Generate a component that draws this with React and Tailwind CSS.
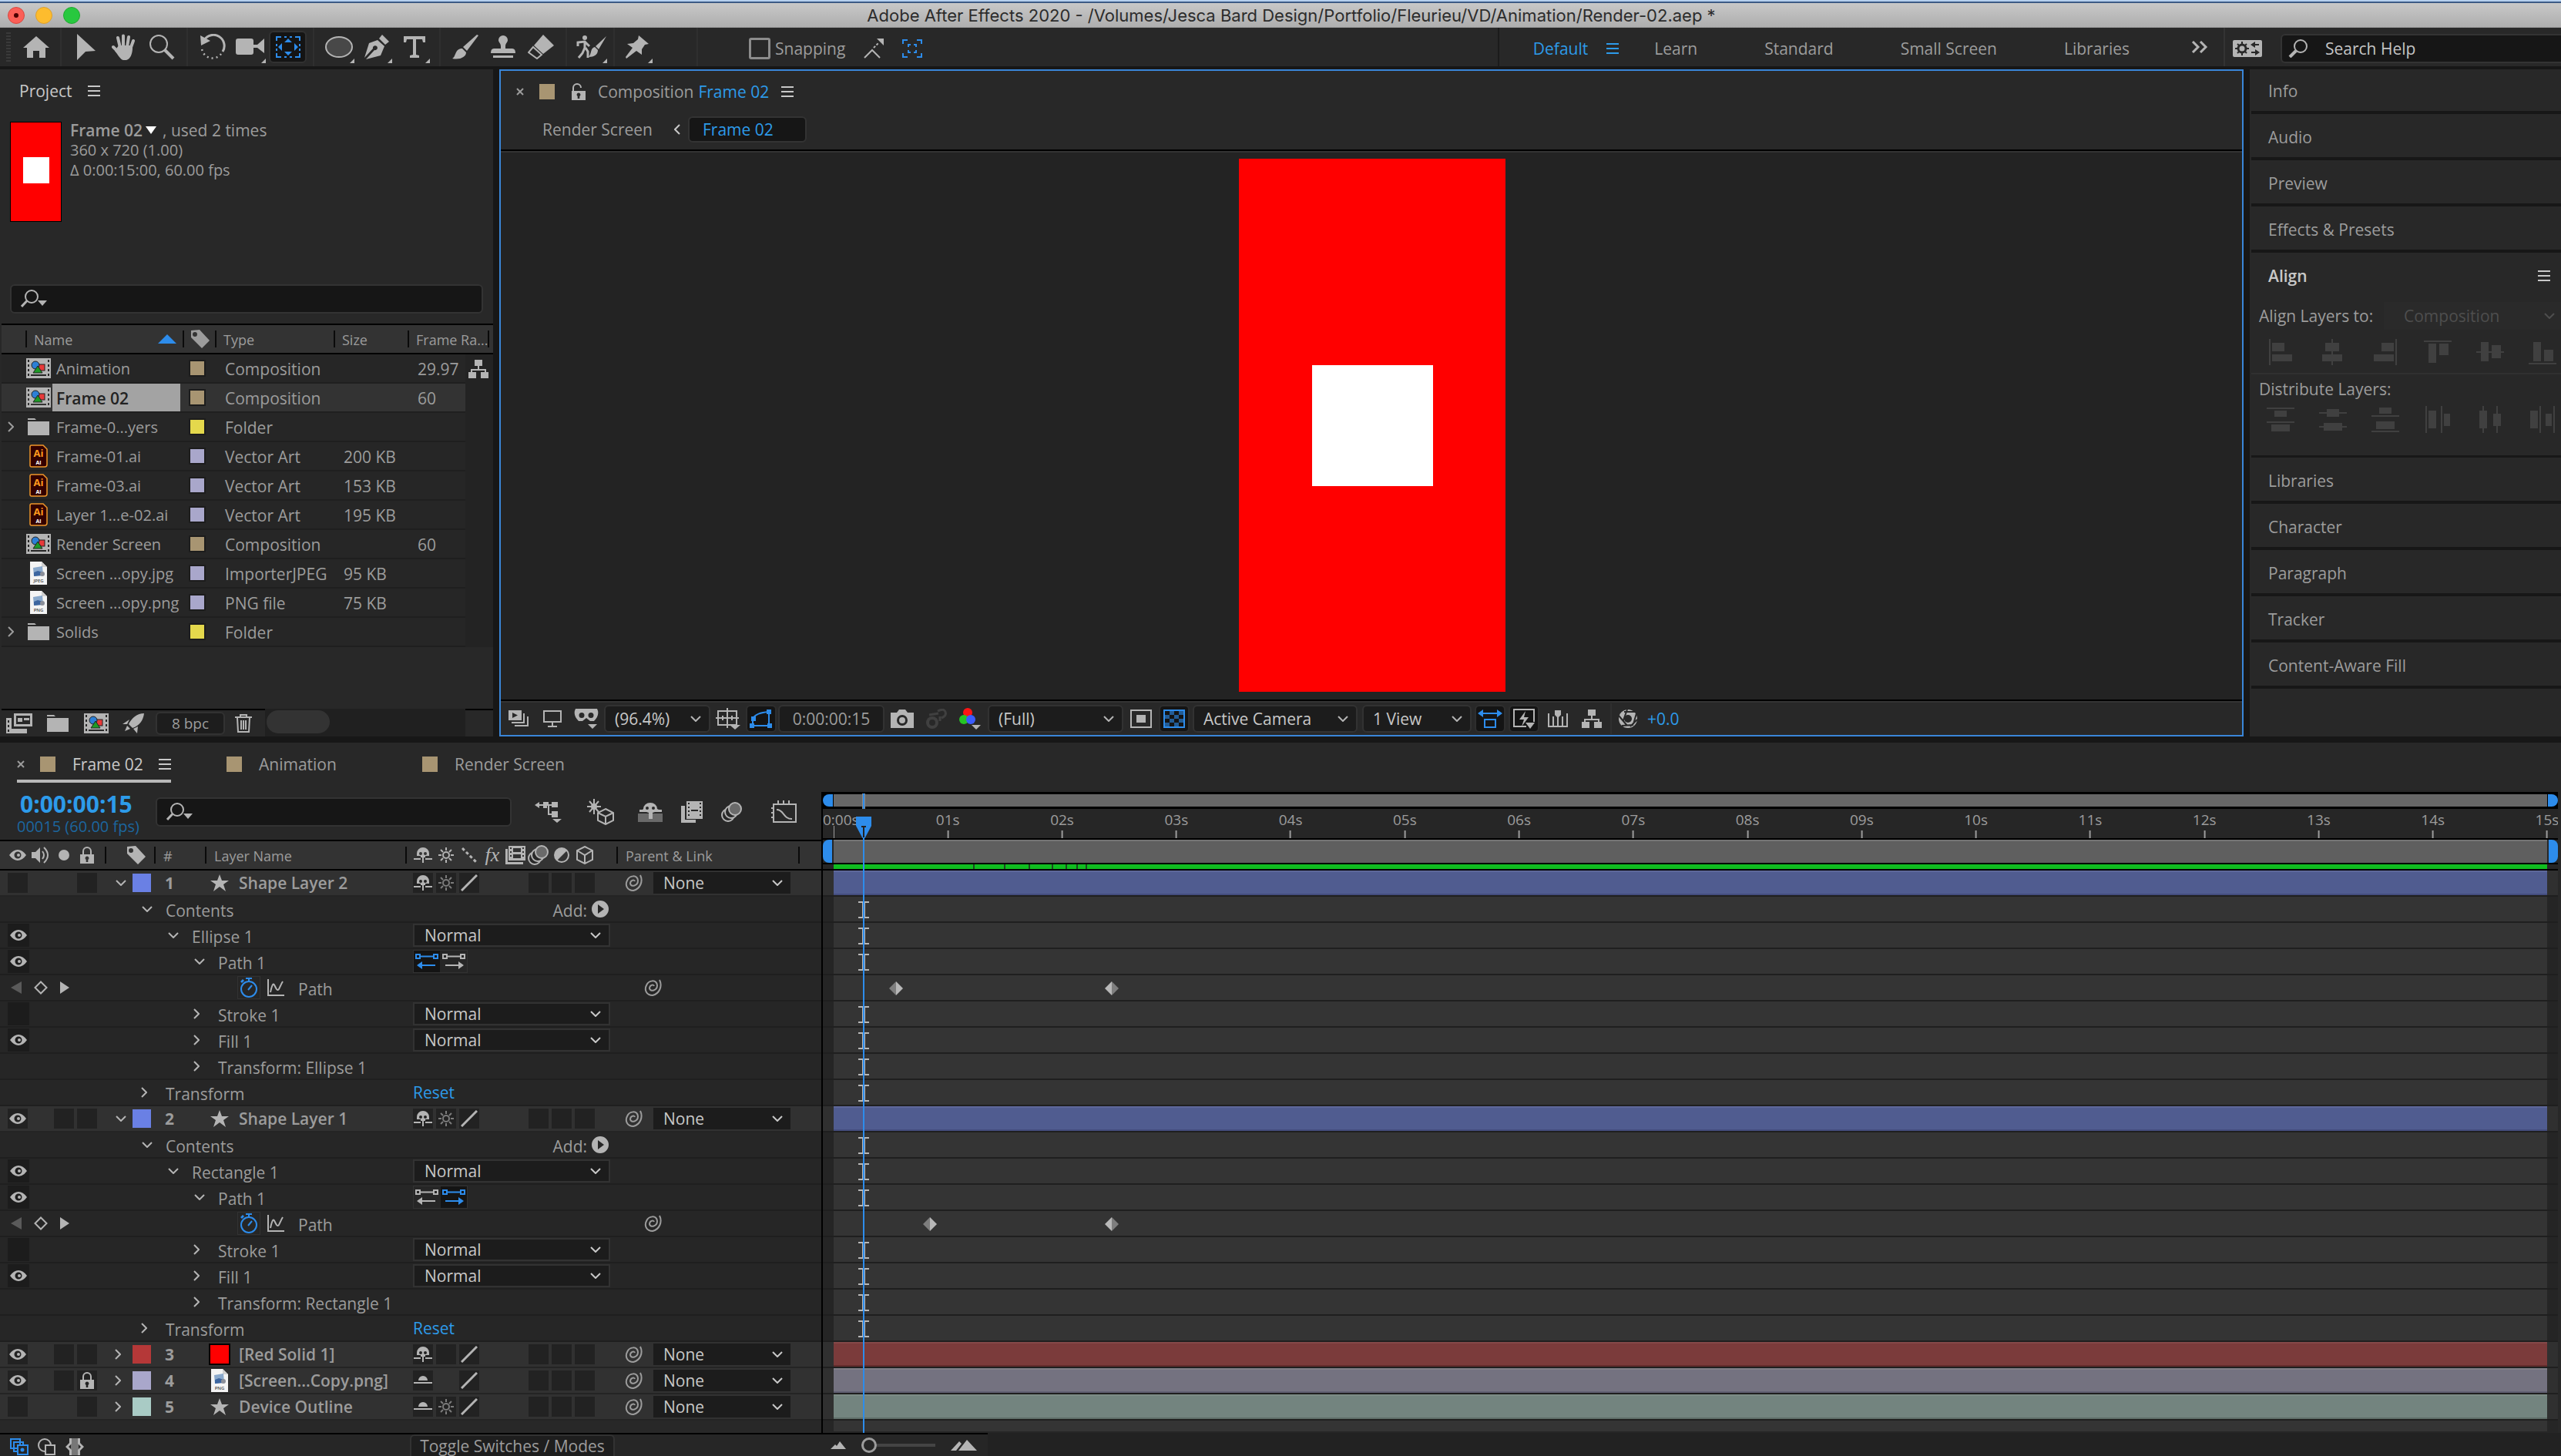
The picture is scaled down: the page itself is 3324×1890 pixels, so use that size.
import React, { useState } from 'react';

const Svg = ({ w, h = w, children, className = '' }) => (
  <svg width={w} height={h} viewBox={`0 0 ${w} ${h}`} fill="currentColor" className={`shrink-0 ${className}`} aria-hidden="true">
    {children}
  </svg>
);

/* ---------- Shared icons ---------- */

const ChevronDown = ({ className = '' }) => (
  <Svg w={14} h={8} className={className}>
    <path d="M1 1l6 6 6-6" fill="none" stroke="currentColor" strokeWidth="2" />
  </Svg>
);

const ChevronRight = ({ className = '' }) => (
  <Svg w={8} h={14} className={className}>
    <path d="M1 1l6 6-6 6" fill="none" stroke="currentColor" strokeWidth="2" />
  </Svg>
);

const MenuIcon = () => (
  <Svg w={16} h={14}>
    <path d="M0 0h16v2H0zM0 6h16v2H0zM0 12h16v2H0z" />
  </Svg>
);

const CloseIcon = () => (
  <Svg w={10}>
    <path d="M1 1l8 8M9 1l-8 8" stroke="currentColor" strokeWidth="2" />
  </Svg>
);

const SearchMenuIcon = () => (
  <Svg w={34} h={24}>
    <circle cx="14" cy="9" r="8" fill="none" stroke="currentColor" strokeWidth="2" />
    <path d="M8 14.500L1 22" stroke="currentColor" strokeWidth="3" />
    <path d="M22 14h12l-6 7z" />
  </Svg>
);

const TagIcon = () => (
  <Svg w={24}>
    <path fillRule="evenodd" d="M0 1L11 0l13 14-10 10L0 10zM5 3a3 3 0 100 6 3 3 0 000-6z" />
  </Svg>
);

const LockIcon = ({ open }) => (
  <Svg w={18} h={22}>
    <path d={open ? 'M2 11V6a5 5 0 0110 0' : 'M4 11V6a5 5 0 0110 0v5'} fill="none" stroke="currentColor" strokeWidth="2" />
    <path fillRule="evenodd" d="M0 10h18v12H0zM9 12.500a2.500 2.500 0 00-1.300 4.600V20h2.600v-2.900A2.500 2.500 0 009 12.500z" />
  </Svg>
);

const EyeIcon = () => (
  <Svg w={22} h={14}>
    <path fillRule="evenodd" d="M0 7Q5 0 11 0t11 7q-5 7-11 7T0 7zM11 2.500a4.500 4.500 0 100 9 4.500 4.500 0 000-9z" />
    <circle cx="12" cy="7" r="2" />
  </Svg>
);

const SpeakerIcon = () => (
  <Svg w={24} h={22}>
    <path d="M0 7h5l6-6v20l-6-6H0z" />
    <path d="M14 6q4 5 0 10M16 1q10 10 0 20" fill="none" stroke="currentColor" strokeWidth="2" />
  </Svg>
);

const ShyIcon = () => (
  <Svg w={24} h={20}>
    <path fillRule="evenodd" d="M4 11V8a8 8 0 0116 0v3h-5v2H9v-2zM9 6a2 2 0 100 4 2 2 0 000-4zm6 0a2 2 0 100 4 2 2 0 000-4z" />
    <path d="M0 14h9v2H0zM15 14h9v2h-9zM11 12h2v8h-2z" />
  </Svg>
);

const ShyDownIcon = () => (
  <Svg w={24} h={12}>
    <path d="M6 6a6 6 0 0112 0zM0 8h24v2H0z" />
  </Svg>
);

const SunIcon = () => (
  <Svg w={22}>
    <circle cx="11" cy="11" r="4" fill="none" stroke="currentColor" strokeWidth="2" />
    <path d="M11 1v4M11 17v4M1 11h4M17 11h4M4 4l3 3M15 15l3 3M18 4l-3 3M7 15l-3 3" stroke="currentColor" strokeWidth="2" />
  </Svg>
);

const SlashIcon = () => (
  <Svg w={22}>
    <path d="M1 21L21 1" stroke="currentColor" strokeWidth="3" />
  </Svg>
);

const FilmIcon = () => (
  <Svg w={26} h={24}>
    <path d="M0 4h3v17h20v3H0z" />
    <path fillRule="evenodd" d="M4 0h22v19H4zM6 2v2h2V2zm0 5v2h2V7zm0 5v2h2v-2zM22 2v2h2V2zm0 5v2h2V7zm0 5v2h2v-2zM10 3v5h10V3zm0 8v5h10v-5z" />
  </Svg>
);

const MotionBlurIcon = () => (
  <Svg w={28} h={26}>
    <circle cx="9" cy="17" r="8" fill="#282828" stroke="currentColor" strokeWidth="2" />
    <circle cx="13" cy="13" r="8" fill="#282828" stroke="currentColor" strokeWidth="2" />
    <circle cx="18" cy="9" r="8" fill="#6a6a6a" stroke="currentColor" strokeWidth="2" />
  </Svg>
);

const CubeIcon = () => (
  <Svg w={24}>
    <path d="M12 1l10 5v12l-10 5L2 18V6zM2 6l10 6 10-6M12 12v11" fill="none" stroke="currentColor" strokeWidth="2" />
  </Svg>
);

const FlowchartIcon = () => (
  <Svg w={26} h={24}>
    <path d="M8 0h10v8H8zM0 16h10v8H0zM16 16h10v8H16zM12 8h2v4h9v4h-2v-2H5v2H3v-4h9z" />
  </Svg>
);

const PickWhip = () => (
  <Svg w={24} h={22}>
    <path
      d="M20 1c4 8 0 18-9 20C3 21 0 14 3 8 6 1 16 0 17 8c0 7-9 9-10 4 0-4 5-6 6-3"
      fill="none"
      stroke="currentColor"
      strokeWidth="2"
    />
  </Svg>
);

const StarIcon = () => (
  <Svg w={24} h={22}>
    <path d="M12 0l3 8h9l-7 5 3 9-8-6-8 6 3-9-7-5h9z" />
  </Svg>
);

const CompIcon = () => (
  <Svg w={32} h={26} className="text-[#b4b4b4]">
    <path
      fillRule="evenodd"
      d="M0 0h32v26H0zM2 2v3h2V2zm0 6v3h2V8zm0 6v3h2v-3zm0 6v3h2v-3zM28 2v3h2V2zm0 6v3h2V8zm0 6v3h2v-3zm0 6v3h2v-3zM6 21v2h20v-2z"
    />
    <rect x="16" y="8" width="8" height="8" fill="#e83a3a" stroke="#222" strokeWidth="1" />
    <circle cx="12" cy="9" r="5" fill="#2d7fd6" stroke="#222" strokeWidth="1" />
    <path d="M15 10l6 9H9z" fill="#1d9a26" stroke="#222" strokeWidth="1" />
  </Svg>
);

const FolderIcon = () => (
  <Svg w={28} h={22} className="text-[#b4b4b4]">
    <path d="M0 0h9l2 2H0zM0 4h28v18H0z" />
  </Svg>
);

const AiIcon = () => (
  <Svg w={24} h={30}>
    <path d="M3 1h15l5 5v20q0 3-3 3H3q-2 0-2-2V3q0-2 2-2z" fill="#330000" stroke="#f0962a" strokeWidth="1.500" />
    <text x="12" y="16" textAnchor="middle" fontSize="13" fontWeight="700" fontFamily="Open Sans, sans-serif" fill="#ff9a1e">Ai</text>
    <text x="12" y="26" textAnchor="middle" fontSize="7" fontWeight="700" fontFamily="Open Sans, sans-serif" fill="#fff">AI</text>
  </Svg>
);

const ImageFileIcon = ({ kind }) => (
  <Svg w={22} h={30}>
    <path d="M0 0h15l7 7v23H0z" fill="#f4f4f4" />
    <path d="M15 0v7h7z" fill="#cfcfcf" />
    <path d="M4 8l12-2 1 11-12 2z" fill="#8aa9cc" />
    <path d="M5 14l5-2 7 2v4l-12 1z" fill="#3d66a0" />
    <circle cx="16" cy="16" r="3" fill="#8b8f99" />
    <text x="11" y="27" textAnchor="middle" fontSize="6" fontWeight="600" fontFamily="Open Sans, sans-serif" fill="#444">{kind}</text>
  </Svg>
);

/* ---------- Title bar and toolbar ---------- */

const TitleBar = () => (
  <header className="shrink-0">
    <div className="h-0.5 bg-[#b5cfee]" />
    <div className="h-0.5 bg-[#3c5a85]" />
    <div className="grid h-8 grid-cols-[1fr_auto_1fr] items-center border-b border-[#9a9a9a] bg-linear-to-b from-[#c8c8c8] to-[#aeaeae] px-2.5">
      <div className="flex gap-3.5">
        <button aria-label="Close" className="flex size-[22px] items-center justify-center rounded-full border border-[#d9483f] bg-[#fb5f57]">
          <span className="size-1.5 rounded-full bg-[#4c0000]" />
        </button>
        <button aria-label="Minimize" className="size-[22px] rounded-full border border-[#dea02c] bg-[#fdbc2e]" />
        <button aria-label="Zoom" className="size-[22px] rounded-full border border-[#1fa92f] bg-[#28c83f]" />
      </div>
      <h1 className="pl-7 font-['Inter',sans-serif] text-[22px] leading-8 text-[#2c2c2c]">
        Adobe After Effects 2020 - /Volumes/Jesca Bard Design/Portfolio/Fleurieu/VD/Animation/Render-02.aep *
      </h1>
    </div>
  </header>
);

const toolGroups = [
  [
    {
      name: 'Selection',
      icon: <Svg w={26} h={36}><path d="M1 1l24 22-13 1L1 35z" /></Svg>,
    },
    {
      name: 'Hand',
      icon: (
        <Svg w={32} h={34}>
          <path d="M11 18L8 5M15 17V2.500M20 17l2-13M24 20l4-11M9 24l-7-7" fill="none" stroke="currentColor" strokeWidth="4" strokeLinecap="round" />
          <path d="M9 15h15l3 3c0 8-3 15-8 16h-4c-4-1-7-7-11-12z" />
        </Svg>
      ),
    },
    {
      name: 'Magnify',
      icon: (
        <Svg w={34} h={34}>
          <circle cx="13" cy="13" r="11" fill="none" stroke="currentColor" strokeWidth="2" />
          <path d="M21 21l11 11" stroke="currentColor" strokeWidth="4" />
        </Svg>
      ),
    },
  ],
  [
    {
      name: 'Rotate',
      icon: (
        <Svg w={34} h={34}>
          <path d="M6 8a14 14 0 0124 15" fill="none" stroke="currentColor" strokeWidth="3" />
          <path d="M1 2l1 13 12-6z" />
          <path d="M28 26a14 14 0 01-25-7" fill="none" stroke="currentColor" strokeWidth="2.500" strokeDasharray="2 4" />
        </Svg>
      ),
    },
    {
      name: 'Camera',
      more: true,
      icon: <Svg w={38} h={24}><path d="M3 1h17q3 0 3 3v5h5l9-8v19l-9-7h-5v6q0 3-3 3H3q-3 0-3-3V4q0-3 3-3z" /></Svg>,
    },
    {
      name: 'Pan Behind',
      active: true,
      icon: (
        <Svg w={32} h={28}>
          <path d="M1 6V1h6M11 1h3M18 1h3M25 1h6v5M31 10v3M31 16v3M31 22v5h-6M21 27h-3M14 27h-3M7 27H1v-5M1 19v-3M1 13v-3" fill="none" stroke="currentColor" strokeWidth="2" />
          <path d="M16 3l5 5H11zM16 25l5-5H11zM3 14l5-5v10zM29 14l-5-5v10z" />
        </Svg>
      ),
    },
  ],
  [
    {
      name: 'Ellipse',
      more: true,
      icon: <Svg w={36} h={30}><ellipse cx="18" cy="15" rx="17" ry="13" fill="#484848" stroke="currentColor" strokeWidth="2" /></Svg>,
    },
    {
      name: 'Pen',
      more: true,
      icon: (
        <Svg w={32} h={32}>
          <path d="M19 5l4-5 9 9-5 4z" />
          <path fillRule="evenodd" d="M17 7l9 8-5 12L2 32l11-12a3 3 0 10-2-2L0 30 6 11z" />
        </Svg>
      ),
    },
    {
      name: 'Type',
      more: true,
      icon: <Svg w={28} h={28}><path d="M0 0h28v8h-3l-1-4h-8v20l4 1v3H8v-3l4-1V4H4L3 8H0z" /></Svg>,
    },
  ],
  [
    {
      name: 'Brush',
      icon: (
        <Svg w={34} h={32}>
          <path d="M32 0l2 1-15 20-5-5z" />
          <path d="M13 18l5 5c0 6-8 10-18 8 5-2 3-13 13-13z" />
        </Svg>
      ),
    },
    {
      name: 'Clone Stamp',
      icon: <Svg w={32} h={30}><path d="M16 0a6 6 0 016 6c0 3-3 4-3 8v3h9q4 0 4 6H0q0-6 4-6h9v-3c0-4-3-5-3-8a6 6 0 016-6zM3 26h26v3H3z" /></Svg>,
    },
    {
      name: 'Eraser',
      icon: (
        <Svg w={34} h={32}>
          <path d="M20 0l14 14-14 11L8 14z" />
          <path d="M7 16l11 10-6 5L1 23z" fill="none" stroke="currentColor" strokeWidth="2" />
        </Svg>
      ),
    },
  ],
];

const rotoTool = {
  name: 'Roto Brush',
  more: true,
  icon: (
    <Svg w={40} h={30}>
      <circle cx="11" cy="3" r="3" />
      <path d="M2 14V9l9-1 6 6M11 8v9M11 16l-3 7-5 6M12 16l3 5v8" fill="none" stroke="currentColor" strokeWidth="3" />
      <path d="M39 1L29 18l-4-4zM24 15l4 4c0 6-5 9-12 9 4-4 2-12 8-13z" />
    </Svg>
  ),
};

const pinTool = {
  name: 'Puppet Pin',
  more: true,
  icon: <Svg w={30} h={30}><path d="M17 0l13 11-5 1-4 6v7l-7-5L1 30 0 28l9-12-7-5 8-1 6-5z" /></Svg>,
};

const ToolButton = ({ tool }) => (
  <button
    aria-label={tool.name}
    className={`relative flex h-[42px] w-[49px] items-center justify-center rounded-md ${
      tool.active ? 'border-2 border-[#313131] bg-[#141414] text-[#2d8ceb]' : 'text-[#b4b4b4]'
    }`}
  >
    {tool.icon}
    {tool.more && (
      <span className="absolute right-1 bottom-0">
        <Svg w={6}><path d="M6 0v6H0z" /></Svg>
      </span>
    )}
  </button>
);

const workspaces = ['Learn', 'Standard', 'Small Screen', 'Libraries'];

const Toolbar = () => {
  const [snapping, setSnapping] = useState(false);
  return (
    <div className="flex h-[50px] shrink-0 items-stretch bg-[#282828]">
      <div className="flex w-[78px] items-center gap-2 pl-2 text-[#b4b4b4]">
        <span className="h-[38px] w-1.5 bg-[repeating-linear-gradient(#3a3a3a_0_2px,transparent_2px_4px)]" />
        <button aria-label="Home" className="flex w-[49px] justify-center">
          <Svg w={34} h={28}><path d="M17 0l17 15h-5v13h-8v-9h-8v9H5V15H0z" /></Svg>
        </button>
      </div>
      {toolGroups.map((group, i) => (
        <div key={i} className="flex items-center border-l-2 border-[#2f2f2f] pr-2 pl-[7px]">
          {group.map(tool => <ToolButton key={tool.name} tool={tool} />)}
        </div>
      ))}
      <div className="flex items-center border-l-2 border-[#2f2f2f] pr-1 pl-[7px]">
        <ToolButton tool={rotoTool} />
      </div>
      <div className="flex w-[108px] items-center border-l-2 border-[#2f2f2f] pl-1">
        <ToolButton tool={pinTool} />
      </div>

      <div className="flex items-center gap-6 border-l-2 border-[#2f2f2f] pt-1 pl-[66px]">
        <label className="flex items-center gap-1.5 text-[#9c9c9c]">
          <input
            type="checkbox"
            checked={snapping}
            onChange={() => setSnapping(!snapping)}
            className="size-7 appearance-none rounded-[3px] border-[3px] border-[#8c8c8c] checked:bg-[#2d8ceb]"
          />
          Snapping
        </label>
        <button aria-label="Snap to edges" className="text-[#b4b4b4]">
          <Svg w={26} h={26}>
            <path d="M1 25l10-10 10 10" fill="none" stroke="currentColor" strokeWidth="2" />
            <path d="M13 12l6-6" stroke="currentColor" strokeWidth="2" strokeDasharray="3 2" />
            <path d="M17 0h9v9z" />
          </Svg>
        </button>
        <button aria-label="Snap to features" className="text-[#2d8ceb]">
          <Svg w={26} h={24}>
            <path d="M1 6V1h6M19 1h6v5M25 18v5h-6M7 23H1v-5M8 10V7h3M15 7h3v3M18 14v3h-3M11 17H8v-3" fill="none" stroke="currentColor" strokeWidth="2" />
          </Svg>
        </button>
      </div>

      <nav className="ml-auto flex items-center border-l-2 border-[#1b1b1b] pt-1 pl-11 text-[#9c9c9c]">
        <button className="flex items-center gap-6 text-[#2d9bea]">
          Default
          <MenuIcon />
        </button>
        <div className="ml-[46px] flex gap-[87px]">
          {workspaces.map(name => <button key={name}>{name}</button>)}
        </div>
        <button aria-label="More workspaces" className="ml-20 pb-1 text-[#b4b4b4]">
          <Svg w={22} h={16}>
            <path d="M2 1l7 7-7 7M12 1l7 7-7 7" fill="none" stroke="currentColor" strokeWidth="3" />
          </Svg>
        </button>
      </nav>
      <div className="ml-5 flex items-center gap-6 border-l-2 border-[#333] pt-1 pl-2.5">
        <button aria-label="Workspace settings" className="text-[#b4b4b4]">
          <Svg w={38} h={22}>
            <path fillRule="evenodd" d="M2 0h34q2 0 2 2v18q0 2-2 2H2q-2 0-2-2V2q0-2 2-2z" />
            <circle cx="12" cy="11" r="5" fill="none" stroke="#282828" strokeWidth="3" />
            <path d="M12 2v4M12 16v4M3 11h4M17 11h4M6 5l2 2M16 15l2 2M18 5l-2 2M8 15l-2 2" stroke="#282828" strokeWidth="2" />
            <path d="M29 2l-6 4 6 4V7h5V5h-5zM29 12l6 4-6 4v-3h-5v-2h5z" fill="#282828" />
          </Svg>
        </button>
        <label className="flex h-[38px] w-[364px] items-center gap-[22px] rounded-l-md border-2 border-r-0 border-[#333] bg-[#161616] pl-2 text-[#b4b4b4]">
          <Svg w={26} h={24}>
            <circle cx="16" cy="9" r="8" fill="none" stroke="currentColor" strokeWidth="2" />
            <path d="M10 15l-8 8" stroke="currentColor" strokeWidth="4" />
          </Svg>
          <input aria-label="Search Help" placeholder="Search Help" className="w-full bg-transparent outline-none placeholder:text-[#c4c4c4]" />
        </label>
      </div>
    </div>
  );
};

/* ---------- Project panel ---------- */

const projectItems = [
  { name: 'Animation', icon: <CompIcon />, color: 'bg-[#a89572]', type: 'Composition', rate: '29.97', used: true },
  { name: 'Frame 02', icon: <CompIcon />, color: 'bg-[#a89572]', type: 'Composition', rate: '60', selected: true },
  { name: 'Frame-0...yers', icon: <FolderIcon />, color: 'bg-[#e4d84c]', type: 'Folder', folder: true },
  { name: 'Frame-01.ai', icon: <AiIcon />, color: 'bg-[#a9a7cb]', type: 'Vector Art', size: '200 KB' },
  { name: 'Frame-03.ai', icon: <AiIcon />, color: 'bg-[#a9a7cb]', type: 'Vector Art', size: '153 KB' },
  { name: 'Layer 1...e-02.ai', icon: <AiIcon />, color: 'bg-[#a9a7cb]', type: 'Vector Art', size: '195 KB' },
  { name: 'Render Screen', icon: <CompIcon />, color: 'bg-[#a89572]', type: 'Composition', rate: '60' },
  { name: 'Screen ...opy.jpg', icon: <ImageFileIcon kind="JPEG" />, color: 'bg-[#a9a7cb]', type: 'ImporterJPEG', size: '95 KB' },
  { name: 'Screen ...opy.png', icon: <ImageFileIcon kind="PNG" />, color: 'bg-[#a9a7cb]', type: 'PNG file', size: '75 KB' },
  { name: 'Solids', icon: <FolderIcon />, color: 'bg-[#e4d84c]', type: 'Folder', folder: true },
];

const headDivider = 'border-l-2 border-black/80 pl-[9px] h-[22px] flex items-center leading-[22px]';

const ProjectPanel = () => (
  <section className="flex w-[640px] shrink-0 flex-col bg-[#282828]">
    <div className="flex h-14 items-center gap-5 pl-[25px] text-[#c8c8c8]">
      Project
      <MenuIcon />
    </div>
    <div className="flex h-[223px] gap-[11px] pt-3 pl-[13px]">
      <div className="flex h-[130px] w-[67px] items-center justify-center border border-black bg-[#ff0000] pb-1">
        <div className="size-[34px] bg-white" />
      </div>
      <div className="-mt-0.5 text-[20px] leading-[26px] text-[#9c9c9c]">
        <p className="flex items-center text-[21px]">
          <b className="font-semibold">Frame 02</b>
          <Svg w={14} h={10} className="mx-1 text-white"><path d="M0 0h14L7 10z" /></Svg>
          <span className="ml-1">, used 2 times</span>
        </p>
        <p>360 x 720 (1.00)</p>
        <p>Δ 0:00:15:00, 60.00 fps</p>
      </div>
    </div>
    <label className="mx-[13px] flex h-[38px] shrink-0 items-center gap-3 rounded-md border-2 border-[#333] bg-[#161616] px-3 text-[#b4b4b4]">
      <SearchMenuIcon />
      <input aria-label="Search project" className="w-full bg-transparent outline-none" />
    </label>

    <div className="mt-[13px] flex-1 pl-0.5">
      <table className="w-full table-fixed border-separate border-spacing-0 bg-[#262626] text-[21px] text-[#9c9c9c]">
        <colgroup>
          <col className="w-[31px]" />
          <col className="w-[204px]" />
          <col className="w-[42px]" />
          <col className="w-[154px]" />
          <col className="w-[96px]" />
          <col className="w-[75px]" />
          <col />
        </colgroup>
        <thead>
          <tr className="h-10 bg-[#333] text-left text-[18px] font-normal *:border-y-2 *:border-black *:p-0 *:font-normal">
            <th />
            <th>
              <div className={headDivider}>
                <span className="pt-0.5">Name</span>
                <Svg w={24} h={12} className="mr-2 ml-auto text-[#2d8ceb]"><path d="M12 0l12 12H0z" /></Svg>
              </div>
            </th>
            <th aria-label="Label"><div className={headDivider}><TagIcon /></div></th>
            <th><div className={headDivider}><span className="pt-0.5">Type</span></div></th>
            <th><div className={headDivider}><span className="pt-0.5">Size</span></div></th>
            <th colSpan={2}>
              <div className="flex items-center">
                <div className={headDivider}><span className="pt-0.5 whitespace-nowrap">Frame Ra...</span></div>
                <span className="h-[22px] w-0.5 bg-black/80" />
              </div>
            </th>
          </tr>
        </thead>
        <tbody>
          {projectItems.map(item => (
            <tr key={item.name} className="h-[38px]">
              <td className={`border-b-2 border-[#1f1f1f] p-0 ${item.selected ? 'bg-[#333]' : ''}`}>
                {item.folder && <button aria-label={`Expand ${item.name}`} className="flex pl-2"><ChevronRight /></button>}
              </td>
              <td className={`border-b-2 border-[#1f1f1f] p-0 ${item.selected ? 'bg-[#333]' : ''}`}>
                <div className="flex h-9 items-stretch gap-0.5 pr-[3px] pl-px">
                  <span className="flex w-8 shrink-0 items-center justify-center">{item.icon}</span>
                  <span className={`flex-1 pl-[5px] leading-[38px] whitespace-nowrap ${item.selected ? 'bg-[#a3a3a3] font-semibold text-[#222]' : 'text-[20px]'}`}>
                    {item.name}
                  </span>
                </div>
              </td>
              <td className={`border-b-2 border-[#1f1f1f] p-0 ${item.selected ? 'bg-[#333]' : ''}`}>
                <span className={`ml-2 block size-[22px] border-2 border-[#1c1c1c] ${item.color}`} />
              </td>
              <td className={`border-b-2 border-[#1f1f1f] p-0 pt-0.5 pl-[13px] ${item.selected ? 'bg-[#333]' : ''}`}>{item.type}</td>
              <td className={`border-b-2 border-[#1f1f1f] p-0 pt-0.5 pl-[13px] whitespace-nowrap ${item.selected ? 'bg-[#333]' : ''}`}>{item.size}</td>
              <td className={`border-b-2 border-[#1f1f1f] p-0 pt-0.5 pl-[13px] ${item.selected ? 'bg-[#333]' : ''}`}>{item.rate}</td>
              <td className="bg-[#232323] p-0 pl-1 text-[#b4b4b4]">{item.used && <FlowchartIcon />}</td>
            </tr>
          ))}
        </tbody>
      </table>
    </div>

    <div className="flex h-9 shrink-0 pl-0.5">
      <div className="flex w-[342px] items-center border-t-2 border-black text-[#b4b4b4]">
        <button aria-label="Interpret Footage" className="flex w-[46px] justify-center">
          <Svg w={34} h={26}>
            <path fillRule="evenodd" d="M10 0h24v17H10zM13 3v11h18V3zM15 6h6v5h-6zM23 6h7v3h-7z" />
            <path fillRule="evenodd" d="M0 6h7v14h20v6H0zM2 9v3h2V9zm0 6v3h2v-3zm0 6v3h2v-3z" />
          </Svg>
        </button>
        <button aria-label="New Folder" className="flex w-[54px] justify-center"><FolderIcon /></button>
        <button aria-label="New Composition" className="flex w-[46px] justify-center"><CompIcon /></button>
        <button aria-label="Project Settings" className="flex w-[50px] justify-center">
          <Svg w={28} h={26}>
            <path d="M28 0c-9 0-16 6-20 14l5 5C22 16 27 9 28 0zM9 8L0 14h6zM14 20l6-3-1 9z" />
            <path d="M6 16l4 4-7 3z" />
          </Svg>
        </button>
        <button className="ml-1 h-[30px] w-[90px] rounded-md border-2 border-[#323232] bg-[#1d1d1d] text-[19px] leading-[26px] text-[#9c9c9c]">8 bpc</button>
        <button aria-label="Delete" className="flex w-12 justify-center">
          <Svg w={22} h={24}>
            <path d="M0 4h22M7 3V1h8v2M3 5l1 18h14l1-18M8 8v12M11 8v12M14 8v12" fill="none" stroke="currentColor" strokeWidth="2" />
          </Svg>
        </button>
      </div>
      <div className="w-[260px] bg-[#202020] p-0.5">
        <div className="h-[30px] w-[82px] rounded-full bg-[#333]" />
      </div>
      <div className="flex-1 border-t-2 border-black" />
    </div>
  </section>
);

/* ---------- Composition viewer ---------- */

const Select = ({ label, value, className }) => (
  <div className={`grid items-center rounded-md border-2 border-[#323232] bg-[#1c1c1c] text-[#c8c8c8] ${className}`}>
    <select aria-label={label} defaultValue={value} className="col-start-1 row-start-1 h-full w-full appearance-none bg-transparent pl-3 outline-none">
      <option>{value}</option>
    </select>
    <ChevronDown className="pointer-events-none col-start-1 row-start-1 mr-2.5 justify-self-end text-[#b4b4b4]" />
  </div>
);

const Cell = ({ label, children }) => (
  <button aria-label={label} className="flex w-[42px] shrink-0 items-center justify-center text-[#b4b4b4]">{children}</button>
);

const activeBox = 'flex h-9 w-10 shrink-0 items-center justify-center rounded-md border-2 border-[#2e2e2e] bg-[#141414]';

const ViewerToolbar = () => (
  <div className="flex h-11 shrink-0 items-center gap-0.5 border-t-2 border-[#333] bg-[#282828] pl-0.5">
    <Cell label="Always preview this view">
      <Svg w={26} h={22}>
        <path fillRule="evenodd" d="M0 0h17v13H0zM5 3v7l7-3.500z" />
        <path d="M19 4h2v13H4v-2h15zM24 8h2v13H8v-2h16z" />
      </Svg>
    </Cell>
    <Cell label="Primary viewer">
      <Svg w={24} h={22}>
        <path fillRule="evenodd" d="M0 0h24v16H0zM2 2v12h20V2zM11 16h2v4h5v2H6v-2h5z" />
      </Svg>
    </Cell>
    <Cell label="Magnification guides">
      <Svg w={32} h={26}>
        <path fillRule="evenodd" d="M2 0h28q4 8-4 16h-5l-5-4-5 4H6Q-2 8 2 0zM10 5a3.500 3.500 0 100 7 3.500 3.500 0 000-7zm12 0a3.500 3.500 0 100 7 3.500 3.500 0 000-7zM18 20h12l-6 6z" />
      </Svg>
    </Cell>
    <Select label="Magnification ratio" value="(96.4%)" className="h-9 w-[138px]" />
    <Cell label="Grid and guides">
      <Svg w={32} h={28}>
        <path d="M3 4h24v18H3zM15 0v26M0 13h30M9 10v6M21 10v6" fill="none" stroke="currentColor" strokeWidth="2" />
        <path d="M18 22h14l-7 6z" />
      </Svg>
    </Cell>
    <button aria-label="Toggle mask visibility" className={`${activeBox} text-[#2d8ceb]`}>
      <Svg w={30} h={24}>
        <path d="M4 21V12Q8 4 25 3v18z" fill="none" stroke="currentColor" strokeWidth="2" />
        <path d="M0 18h6v6H0zM23 18h6v6h-6zM22 0h6v6h-6zM2 9h6v6H2z" />
      </Svg>
    </button>
    <button className="h-9 w-[138px] rounded-md border-2 border-[#323232] bg-[#1c1c1c] leading-8 text-[#9c9c9c]">0:00:00:15</button>
    <Cell label="Take snapshot">
      <Svg w={30} h={24}>
        <path fillRule="evenodd" d="M0 4h8l3-4h8l3 4h8v20H0zM15 7a7 7 0 100 14 7 7 0 000-14zm0 3a4 4 0 110 8 4 4 0 010-8z" />
      </Svg>
    </Cell>
    <button aria-label="Show snapshot" className="flex w-[42px] shrink-0 justify-center text-[#404040]">
      <Svg w={30} h={26}>
        <circle cx="10" cy="18" r="8" />
        <circle cx="10" cy="18" r="4" fill="#282828" />
        <path d="M6 8l12-2M17 3q8-4 10 1t-5 8M20 10v6" fill="none" stroke="currentColor" strokeWidth="3" />
      </Svg>
    </button>
    <Cell label="Show channel">
      <Svg w={28} h={28}>
        <circle cx="11" cy="6" r="6" fill="#ff1414" />
        <circle cx="6" cy="15" r="6" fill="#25c425" />
        <circle cx="15" cy="15" r="6" fill="#3a5cff" />
        <path d="M16 22h12l-6 6z" />
      </Svg>
    </Cell>
    <Select label="Resolution" value="(Full)" className="h-9 w-44" />
    <Cell label="Region of interest">
      <Svg w={28} h={24}>
        <path fillRule="evenodd" d="M0 0h28v24H0zM2 2v20h24V2z" />
        <path d="M8 7h12v10H8z" />
      </Svg>
    </Cell>
    <button aria-label="Toggle transparency grid" className={`${activeBox} text-[#2d8ceb]`}>
      <Svg w={28} h={24}>
        <path d="M1 1h26v22H1z" fill="none" stroke="currentColor" strokeWidth="2" />
        <path d="M8 2h6v5H8zM20 2h6v5h-6zM2 7h6v5H2zM14 7h6v5h-6zM8 12h6v5H8zM20 12h6v5h-6zM2 17h6v5H2zM14 17h6v5h-6z" opacity="0.6" />
      </Svg>
    </button>
    <Select label="3D view" value="Active Camera" className="ml-0.5 h-9 w-[214px]" />
    <Select label="View layout" value="1 View" className="ml-1 h-9 w-[142px]" />
    <div className="flex items-center gap-1 pl-0.5">
      <button aria-label="Pixel aspect ratio" className={`${activeBox} text-[#2d8ceb]`}>
        <Svg w={32} h={24}>
          <path d="M0 5l7-5v4h18V0l7 5-7 5V6H7v4z" />
          <path d="M9 13h14v10H9z" fill="none" stroke="currentColor" strokeWidth="2" />
        </Svg>
      </button>
      <button aria-label="Fast previews" className={`${activeBox} text-[#b4b4b4]`}>
        <Svg w={28} h={26}>
          <path d="M17 23H1V1h26v16" fill="none" stroke="currentColor" strokeWidth="2" />
          <path d="M16 3L8 14h6l-3 9 9-12h-6zM16 18h12l-6 8z" />
        </Svg>
      </button>
      <button aria-label="Timeline" className="flex w-10 shrink-0 justify-center text-[#b4b4b4]">
        <Svg w={26} h={22}>
          <path d="M1 4v17h24V4M7 8v12M13 8v12M19 8v12" fill="none" stroke="currentColor" strokeWidth="2" />
          <path d="M9 0h8v6l-4 4-4-4z" />
        </Svg>
      </button>
      <button aria-label="Composition flowchart" className="flex w-10 shrink-0 justify-center text-[#b4b4b4]"><FlowchartIcon /></button>
      <button aria-label="Reset exposure" className="flex h-10 w-11 items-center justify-center border-l-2 border-[#2f2f2f] text-[#b4b4b4]">
        <Svg w={26} h={24}>
          <circle cx="13" cy="12" r="12" />
          <path d="M12 0l-5 14M1 8l11 13M5 21l15-1M25 13l-9 9M24 5l-4 14M8 3h16" stroke="#282828" strokeWidth="2" />
          <circle cx="13" cy="12" r="5" fill="#282828" />
        </Svg>
      </button>
      <button className="text-[#2d9bea]">+0.0</button>
    </div>
  </div>
);

const CompositionPanel = () => (
  <section className="flex min-w-0 flex-1 flex-col border-2 border-[#3a86d8] bg-[#282828] text-[#9c9c9c]">
    <div className="flex h-[54px] items-center pl-5">
      <button aria-label="Close tab"><CloseIcon /></button>
      <span className="ml-5 size-5 bg-[#a89572]" />
      <span className="ml-[22px] text-[#b4b4b4]"><LockIcon open /></span>
      <h2 className="ml-4 flex gap-1.5">
        Composition <span className="text-[#2d9bea]">Frame 02</span>
      </h2>
      <button aria-label="Panel menu" className="ml-4 text-[#c8c8c8]"><MenuIcon /></button>
    </div>
    <div className="flex h-12 items-center pb-1 pl-[54px]">
      <a href="#render-screen" className="w-[171px]">Render Screen</a>
      <Svg w={8} h={14} className="text-[#c8c8c8]"><path d="M7 1L1 7l6 6" fill="none" stroke="currentColor" strokeWidth="2" /></Svg>
      <a href="#frame-02" className="ml-2.5 h-[34px] w-[154px] rounded-md border-2 border-[#333] bg-[#161616] pl-[17px] leading-[30px] text-[#2d9bea]">
        Frame 02
      </a>
    </div>
    <div className="flex flex-1 items-center justify-center border-y-2 border-black bg-[#232323] pl-0.5 shadow-[inset_0_2px_#333]">
      <div className="flex h-[692px] w-[346px] items-center justify-center bg-[#ff0000]">
        <div className="size-[157px] bg-white" />
      </div>
    </div>
    <ViewerToolbar />
  </section>
);

/* ---------- Right column ---------- */

const alignIcons = [
  ['Align left', 'M0 0h2v34H0zM4 5h16v11H4zM4 20h26v9H4z'],
  ['Align horizontal centers', 'M13 0h2v34h-2zM5 5h18v11H5zM1 20h26v9H1z'],
  ['Align right', 'M28 0h2v34h-2zM10 5h16v11H10zM0 20h26v9H0z'],
  ['Align top', 'M0 2h36v2H0zM6 6h10v25H6zM20 6h12v15H20z'],
  ['Align vertical centers', 'M0 16h36v2H0zM6 4h10v25H6zM20 8h12v17H20z'],
  ['Align bottom', 'M0 31h36v2H0zM6 4h10v25H6zM20 14h12v15H20z'],
];

const distributeIcons = [
  ['Distribute top', 'M0 2h36v2H0zM10 6h16v8H10zM0 20h36v2H0zM6 24h24v9H6z'],
  ['Distribute vertical centers', 'M0 8h36v2H0zM10 4h16v10H10zM0 26h36v2H0zM6 22h24v10H6z'],
  ['Distribute bottom', 'M10 2h16v8H10zM0 12h36v2H0zM6 20h24v10H6zM0 32h36v2H0z'],
  ['Distribute left', 'M2 0h2v35H2zM6 6h10v23H6zM22 0h2v35h-2zM26 10h8v16h-8z'],
  ['Distribute horizontal centers', 'M4 6h10v23H4zM8 0h2v35H8zM22 10h10v16H22zM26 0h2v35h-2z'],
  ['Distribute right', 'M2 6h10v23H2zM14 0h2v35h-2zM22 10h8v16h-8zM32 0h2v35h-2z'],
];

const PanelTab = ({ title }) => (
  <button className="ml-0.5 flex h-[60px] w-full shrink-0 items-center border-b-4 border-[#171717] pt-1 pl-[22px] text-left">
    {title}
  </button>
);

const Sidebar = () => (
  <aside className="flex w-[404px] shrink-0 flex-col overflow-hidden bg-[#282828] text-[21px] text-[#9c9c9c]">
    <div className="-mt-0.5 flex flex-col">
      {['Info', 'Audio', 'Preview', 'Effects & Presets'].map(t => <PanelTab key={t} title={t} />)}
    </div>
    <div className="ml-0.5 h-[266px] border-b-[3px] border-[#171717]">
      <div className="flex h-[62px] items-center justify-between pr-3.5 pb-0.5 pl-[22px] font-semibold text-[#c8c8c8]">
        Align
        <MenuIcon />
      </div>
      <div className="flex h-10 items-center pl-2.5">
        <label htmlFor="align-to" className="w-[162px] whitespace-nowrap">Align Layers to:</label>
        <div className="grid h-9 flex-1 items-center bg-[#2a2a2a] text-[#4e4e4e]">
          <select id="align-to" disabled className="col-start-1 row-start-1 w-full appearance-none pl-[26px] opacity-100">
            <option>Composition</option>
          </select>
          <ChevronDown className="col-start-1 row-start-1 mr-2 justify-self-end" />
        </div>
      </div>
      <div className="flex h-14 items-center border-b-2 border-[#303030] pl-1 text-[#404040]">
        {alignIcons.map(([label, d], i) => (
          <button key={label} aria-label={label} className="flex w-[68px] shrink-0 justify-center">
            <Svg w={i < 3 ? 30 : 36} h={35}><path d={d} /></Svg>
          </button>
        ))}
      </div>
      <p className="h-9 pl-2.5 leading-[38px]">Distribute Layers:</p>
      <div className="flex h-11 items-center pl-1 text-[#404040]">
        {distributeIcons.map(([label, d]) => (
          <button key={label} aria-label={label} className="flex w-[68px] shrink-0 justify-center">
            <Svg w={36} h={35}><path d={d} /></Svg>
          </button>
        ))}
      </div>
    </div>
    {['Libraries', 'Character', 'Paragraph', 'Tracker', 'Content-Aware Fill'].map(t => <PanelTab key={t} title={t} />)}
  </aside>
);

/* ---------- Timeline ---------- */

const subRows = shape => [
  { name: 'Contents', depth: 0, open: true, add: true },
  { name: shape, depth: 1, open: true, eye: true, mode: true },
  { name: 'Path 1', depth: 2, open: true, eye: true, direction: shape === 'Ellipse 1' ? 'left' : 'right' },
  { name: 'Path', keyframes: shape === 'Ellipse 1' ? [3.64, 16.22] : [5.6, 16.22] },
  { name: 'Stroke 1', depth: 2, eyeBox: true, mode: true },
  { name: 'Fill 1', depth: 2, eye: true, mode: true },
  { name: `Transform: ${shape}`, depth: 2 },
  { name: 'Transform', depth: 0, reset: true },
];

const blueBar = 'border-t-[#5d679a] border-b-[#444d7e] bg-[#505c90]';

const rows = [
  { layer: 1, name: 'Shape Layer 2', color: 'bg-[#6a80e4]', bar: blueBar, icon: <StarIcon />, open: true, shy: true, sun: true },
  ...subRows('Ellipse 1'),
  { layer: 2, name: 'Shape Layer 1', color: 'bg-[#6a80e4]', bar: blueBar, icon: <StarIcon />, open: true, eye: true, shy: true, sun: true },
  ...subRows('Rectangle 1'),
  { layer: 3, name: '[Red Solid 1]', color: 'bg-[#b53838]', bar: 'border-t-[#844848] border-b-[#642c2c] bg-[#7b3b3b]', icon: <span className="size-7 border-2 border-black bg-[#ff0000]" />, eye: true, shy: true },
  { layer: 4, name: '[Screen...Copy.png]', color: 'bg-[#a9a7cb]', bar: 'border-t-[#807f88] border-b-[#605f72] bg-[#747280]', icon: <ImageFileIcon kind="PNG" />, eye: true, locked: true },
  { layer: 5, name: 'Device Outline', color: 'bg-[#a9cbc5]', bar: 'border-t-[#7c8c86] border-b-[#5f6e69] bg-[#73847f]', icon: <StarIcon />, sun: true },
];

const box = 'mx-0.5 flex size-[26px] shrink-0 items-center justify-center bg-[#222]';
const gapBox = 'w-[30px] shrink-0';

const LayerRow = ({ row }) => (
  <div className="flex h-[34px] items-center border-b-2 border-[#242424] bg-[#313131] pl-2 text-[#b4b4b4]">
    <button aria-label="Visibility" className={box}>{row.eye && <EyeIcon />}</button>
    <span className={gapBox} />
    {row.eye ? <button aria-label="Solo" className={box} /> : <span className={gapBox} />}
    <button aria-label="Lock" className={box}>{row.locked && <LockIcon />}</button>
    <button aria-label="Twirl" className="ml-3.5 flex w-[30px] justify-center">{row.open ? <ChevronDown /> : <ChevronRight className="mr-2" />}</button>
    <span className={`size-6 ${row.color}`} />
    <span className="w-[70px] pl-[18px] font-bold text-[#9c9c9c]">{row.layer}</span>
    <span className="flex w-[38px] justify-center">{row.icon}</span>
    <span className="w-[230px] pl-1.5 font-semibold whitespace-nowrap text-[#9c9c9c]">{row.name}</span>
    <button aria-label="Shy" className={box}>{row.shy ? <ShyIcon /> : <ShyDownIcon />}</button>
    {row.locked ? <span className={gapBox} /> : <button aria-label="Collapse" className={`${box} text-[#7c7c7c]`}>{row.sun && <SunIcon />}</button>}
    <button aria-label="Quality" className={box}><SlashIcon /></button>
    <span className="w-[60px]" />
    <button aria-label="Motion Blur" className={box} />
    <button aria-label="Adjustment Layer" className={box} />
    <button aria-label="3D Layer" className={box} />
    <button aria-label="Parent pick whip" className="ml-[34px] flex w-[30px] justify-center text-[#9c9c9c]"><PickWhip /></button>
    <div className="ml-2.5 grid h-7 w-[178px] items-center bg-[#1c1c1c] text-[#c8c8c8]">
      <select aria-label={`Parent of ${row.name}`} className="col-start-1 row-start-1 h-7 w-full appearance-none pl-[13px] leading-7">
        <option>None</option>
      </select>
      <ChevronDown className="pointer-events-none col-start-1 row-start-1 mr-2.5 justify-self-end" />
    </div>
  </div>
);

const DirectionIcon = ({ flip }) => (
  <Svg w={30} h={24}>
    <path d="M1 3h5v5H1zM24 3h5v5h-5zM6 5.500h18" fill="none" stroke="currentColor" strokeWidth="2" />
    {flip ? <path d="M28 17l-7-5v4H4v2h17v4z" /> : <path d="M2 17l7-5v4h17v2H9v4z" />}
  </Svg>
);

const depthPad = ['pl-12', 'pl-[82px]', 'pl-[116px]'];
const subEye = 'flex h-[30px] w-7 items-center justify-center bg-[#1c1c1c]';

const PropertyRow = ({ row }) => (
  <div className="flex h-[34px] items-center border-b-2 border-[#1f1f1f] bg-[#262626] text-[#b4b4b4]">
    <div className="flex w-32 items-center pl-2.5">
      {(row.eye || row.eyeBox) && <button aria-label="Visibility" className={subEye}>{row.eye && <EyeIcon />}</button>}
      {row.keyframes && (
        <div className="flex items-center gap-4 pl-1">
          <button aria-label="Previous keyframe" className="text-[#5a5a5a]"><Svg w={14} h={16}><path d="M14 0v16L0 8z" /></Svg></button>
          <button aria-label="Add keyframe">
            <Svg w={18}><path d="M9 1.500L16.500 9 9 16.500 1.500 9z" fill="none" stroke="currentColor" strokeWidth="2" /></Svg>
          </button>
          <button aria-label="Next keyframe"><Svg w={12} h={16}><path d="M0 0v16l12-8z" /></Svg></button>
        </div>
      )}
    </div>
    {row.keyframes ? (
      <div className="flex w-[406px] items-center pl-[180px]">
        <button aria-label="Stopwatch" className="flex h-[30px] w-[30px] items-center justify-center border border-[#323232] text-[#2d8ceb]">
          <Svg w={24} h={26}>
            <circle cx="12" cy="15" r="10" fill="none" stroke="currentColor" strokeWidth="2" />
            <path d="M8 0h8v2h-3v3h-2V2H8zM1 5l3-3 2 2-3 3z" />
            <path d="M11 16l5-6" stroke="currentColor" strokeWidth="2" />
          </Svg>
        </button>
        <button aria-label="Graph" className="flex w-10 justify-center">
          <Svg w={22} h={22}>
            <path d="M1 0v21h21M4 17c4-18 5-8 8-4s4-4 8-10" fill="none" stroke="currentColor" strokeWidth="2" />
          </Svg>
        </button>
        <span className="pt-1 pl-[9px] text-[#9c9c9c]">{row.name}</span>
      </div>
    ) : (
      <div className={`flex w-[406px] items-center ${depthPad[row.depth]}`}>
        <button aria-label={`Twirl ${row.name}`} className="flex w-[30px] justify-center">{row.open ? <ChevronDown /> : <ChevronRight className="mr-2" />}</button>
        <span className="pt-1 pl-[9px] whitespace-nowrap text-[#9c9c9c]">{row.name}</span>
      </div>
    )}
    <div className="flex w-[260px] items-center pl-0.5">
      {row.add && (
        <button className="ml-auto flex items-center gap-1.5 pr-1 text-[#9c9c9c]">
          <span className="pt-1">Add:</span>
          <Svg w={22} className="text-[#b4b4b4]">
            <path fillRule="evenodd" d="M11 0a11 11 0 110 22 11 11 0 010-22zM8 5v12l8-6z" />
          </Svg>
        </button>
      )}
      {row.mode && (
        <div className="grid h-[30px] w-64 items-center border-2 border-[#323232] bg-[#1c1c1c] text-[#c8c8c8]">
          <select aria-label={`Blend mode of ${row.name}`} className="col-start-1 row-start-1 h-[26px] w-full appearance-none pl-[13px] leading-[26px]">
            <option>Normal</option>
          </select>
          <ChevronDown className="pointer-events-none col-start-1 row-start-1 mr-2.5 justify-self-end" />
        </div>
      )}
      {row.direction && (
        <div className="flex gap-px border border-[#323232]">
          <button aria-label="Reverse path off" className={`flex h-7 w-[34px] items-center justify-center ${row.direction === 'left' ? 'bg-[#141414] text-[#2d8ceb]' : 'bg-[#262626]'}`}>
            <DirectionIcon />
          </button>
          <button aria-label="Reverse path on" className={`flex h-7 w-[34px] items-center justify-center ${row.direction === 'right' ? 'bg-[#141414] text-[#2d8ceb]' : 'bg-[#262626]'}`}>
            <DirectionIcon flip />
          </button>
        </div>
      )}
      {row.reset && <button className="text-[#2d9bea]">Reset</button>}
    </div>
    {row.keyframes && <button aria-label="Expression pick whip" className="ml-[42px] text-[#9c9c9c]"><PickWhip /></button>}
  </div>
);

const Divider = () => <span className="h-[22px] w-0.5 shrink-0 bg-black/80" />;
const HeadIcon = ({ children }) => <span className="flex w-[30px] shrink-0 justify-center">{children}</span>;

const ColumnHeader = () => (
  <div className="flex h-10 items-center border-y-2 border-black bg-[#333] text-[18px] text-[#b4b4b4]">
    <div className="flex w-[136px] items-center pl-2">
      <HeadIcon><EyeIcon /></HeadIcon>
      <HeadIcon><SpeakerIcon /></HeadIcon>
      <HeadIcon><Svg w={14}><circle cx="7" cy="7" r="7" /></Svg></HeadIcon>
      <HeadIcon><LockIcon /></HeadIcon>
    </div>
    <Divider />
    <div className="flex w-[62px] justify-center pl-4"><TagIcon /></div>
    <Divider />
    <div className="w-16 pt-0.5 pl-2.5 text-[#9c9c9c]">#</div>
    <Divider />
    <div className="w-[258px] pt-0.5 pl-2.5 text-[#9c9c9c]">Layer Name</div>
    <Divider />
    <div className="flex w-[272px] items-center pl-1.5">
      <HeadIcon><ShyIcon /></HeadIcon>
      <HeadIcon><SunIcon /></HeadIcon>
      <HeadIcon>
        <Svg w={20}><path d="M1 1l18 18" stroke="currentColor" strokeWidth="3" strokeDasharray="4 3" /></Svg>
      </HeadIcon>
      <HeadIcon><i className="font-['Liberation_Serif',serif] text-[26px] leading-7">fx</i></HeadIcon>
      <HeadIcon><FilmIcon /></HeadIcon>
      <HeadIcon><MotionBlurIcon /></HeadIcon>
      <HeadIcon>
        <Svg w={22}>
          <circle cx="11" cy="11" r="9" fill="none" stroke="currentColor" strokeWidth="2" />
          <path d="M17 4A9 9 0 114 17z" transform="rotate(180 11 11)" />
        </Svg>
      </HeadIcon>
      <HeadIcon><CubeIcon /></HeadIcon>
    </div>
    <Divider />
    <div className="w-[234px] pt-0.5 pl-2.5 text-[#9c9c9c]">{'Parent & Link'}</div>
    <Divider />
  </div>
);

const TimelineControls = () => (
  <div className="flex h-[72px] items-center text-[#b4b4b4]">
    <div className="w-[202px] pt-1 pl-[22px] whitespace-nowrap">
      <button className="ml-1 block text-[30px] leading-[34px] font-bold text-[#2d9bea]">0:00:00:15</button>
      <p className="text-[20px] leading-6 text-[#1c669f]">00015 (60.00 fps)</p>
    </div>
    <label className="flex h-[38px] w-[462px] items-center gap-3 rounded-md border-2 border-[#333] bg-[#161616] px-3">
      <SearchMenuIcon />
      <input aria-label="Search layers" className="w-full bg-transparent outline-none" />
    </label>
    <div className="ml-6 flex items-center">
      <button aria-label="Mini-flowchart" className="flex w-12 justify-center">
        <Svg w={36} h={28}>
          <path d="M0 5l6-4v3h5V1h7v3h4V1h8v7h-8V6h-3v10h3v-3h8v8h-8v-3h-5V6h-1v3h-5V6H6v3zM23 23h12l-6 5z" />
        </Svg>
      </button>
      <button aria-label="Draft 3D" className="ml-5 flex w-12 justify-center">
        <Svg w={36} h={34}>
          <path d="M9 0v20M0 10h18M3 3l12 14M15 3L3 17" stroke="currentColor" strokeWidth="2" />
          <circle cx="9" cy="10" r="4" />
          <path d="M24 13l10 5v10l-10 5-10-5V18zM14 18l10 5 10-5M24 23v10" fill="#282828" stroke="currentColor" strokeWidth="2" />
        </Svg>
      </button>
      <button aria-label="Hide shy layers" className="ml-4 flex w-12 justify-center">
        <Svg w={32} h={26}>
          <path d="M0 15h32v11H0z" fill="#6a6a6a" />
          <path fillRule="evenodd" d="M7 9a9 8 0 0118 0l2 1h4v3h-9l-3 1v8h-5v-8l-3-1H2v-3h4zM12 6a2 2 0 100 4 2 2 0 000-4zm8 0a2 2 0 100 4 2 2 0 000-4z" />
        </Svg>
      </button>
      <button aria-label="Frame blending" className="ml-1.5 flex w-12 justify-center">
        <Svg w={28} h={28}>
          <path d="M0 6h5v18h14v4H0z" />
          <path fillRule="evenodd" d="M7 0h21v23H7zM9 2v2h2V2zm0 5v2h2V7zm0 5v2h2v-2zm0 5v2h2v-2zM24 2v2h2V2zm0 5v2h2V7zm0 5v2h2v-2zm0 5v2h2v-2zM13 11h9v2h-9z" />
        </Svg>
      </button>
      <button aria-label="Motion blur" className="ml-1 flex w-12 justify-center"><MotionBlurIcon /></button>
      <button aria-label="Graph editor" className="ml-5 flex w-12 justify-center">
        <Svg w={34} h={30}>
          <path d="M3 5h29v23H3zM9 0v5M16 0v5M23 0v5M0 10h3M0 16h3M0 22h3M7 12c10 0 8 12 20 12" fill="none" stroke="currentColor" strokeWidth="2" />
        </Svg>
      </button>
    </div>
  </div>
);

const seconds = Array.from({ length: 15 }, (_, i) => i + 1);
// cache breaks under the work area, in percent of the composition
const cacheGaps = [8.14, 9.94, 11.38, 12.72, 13.54, 14.18, 14.7];

const PlayheadBeam = () => (
  <Svg w={14} h={22}><path d="M0 0h14v2H9v18h5v2H0v-2h5V2H0z" /></Svg>
);

const Keyframe = ({ at, last }) => (
  <span className="absolute top-2 -translate-x-1/2" style={{ left: `${at}%` }}>
    <Svg w={18}>
      <path d="M9 0v18L0 9z" fill={last ? '#b8b8b8' : '#7e7e7e'} />
      <path d="M9 0v18l9-9z" fill={last ? '#7e7e7e' : '#b8b8b8'} />
    </Svg>
  </span>
);

const TrackArea = () => (
  <div className="min-w-0 flex-1 pt-2.5 pr-1">
    <div className="relative h-[832px] overflow-hidden border-l-2 border-black bg-[#262626]">
      <div className="flex h-[22px] items-center bg-black py-0.5">
        <span className="h-4 w-[13px] rounded-l-full bg-[#2d8ceb]" />
        <span className="mx-px h-4 flex-1 bg-[#676767]" />
        <span className="h-4 w-[13px] rounded-r-full bg-[#2d8ceb]" />
      </div>
      <div className="relative h-[38px] px-3.5 text-[19px] leading-6 text-[#9c9c9c]">
        <span className="absolute top-0.5 left-0">0:00s</span>
        <div className="relative h-full">
          <span className="absolute bottom-0 left-0 h-4 w-px bg-[#9c9c9c]" />
          {seconds.map(s => (
            <span key={s} className="absolute bottom-0 flex -translate-x-1/2 flex-col items-center gap-0.5" style={{ left: `${(s / 15) * 100}%` }}>
              {`${String(s).padStart(2, '0')}s`}
              <span className="h-2.5 w-0.5 bg-[#9c9c9c]" />
            </span>
          ))}
        </div>
      </div>
      <div className="flex h-[34px] items-center border-y-2 border-black">
        <span className="h-[30px] w-[12px] rounded-l-lg bg-[#2d8ceb]" />
        <span className="mx-0.5 h-[30px] flex-1 border-t-2 border-[#757575] bg-[#5f5f5f]" />
        <span className="h-[30px] w-[12px] rounded-r-lg bg-[#2d8ceb]" />
      </div>
      <div className="h-2 border-b-2 border-black">
        <div className="relative mx-3.5 h-1.5 bg-[#10bd20]">
          {cacheGaps.map(g => <span key={g} className="absolute h-1.5 w-0.5 bg-[#1a4a1e]" style={{ left: `${g}%` }} />)}
        </div>
      </div>
      {rows.map((row, i) => (
        <div key={i} className={`h-[34px] border-b-2 border-[#1f1f1f] px-3.5 ${row.layer ? 'bg-[#303030]' : 'bg-[#252525]'}`}>
          {row.layer ? (
            <div className={`h-8 border-y-2 ${row.bar}`} />
          ) : (
            <div className="relative h-8 bg-[#343434]">
              {row.keyframes
                ? row.keyframes.map((k, n) => <Keyframe key={k} at={k} last={n === 1} />)
                : (
                  <span className="absolute top-1.5 left-[1.74%] -translate-x-1/2 text-[#b8b8b8]"><PlayheadBeam /></span>
                )}
            </div>
          )}
        </div>
      ))}
      <div className="mx-3.5 h-3.5 bg-[#343434]" />

      {/* Current time indicator */}
      <div className="pointer-events-none absolute inset-x-3.5 top-0 bottom-0 text-[#2d8ceb]">
        <span className="absolute top-0.5 left-[1.74%] h-5 w-1 -translate-x-1/2 border-x border-[#8a8a8a] bg-[#2d8ceb]" />
        <span className="absolute top-8 left-[1.74%] -translate-x-1/2">
          <Svg w={22} h={28}>
            <path d="M1 0h20v12L12.500 28h-3L1 12z" />
            <path d="M8 13h6M11 13v14" stroke="#222" strokeWidth="2" />
          </Svg>
        </span>
        <span className="absolute top-[60px] bottom-0 left-[1.74%] w-0.5 -translate-x-1/2 bg-[#2d8ceb]" />
      </div>
    </div>
  </div>
);

const TimelineFooter = () => (
  <div className="flex h-[30px] bg-[#222]">
    <div className="flex w-[1282px] shrink-0 items-center border-t-2 border-black bg-[#262626] text-[#b4b4b4]">
      <div className="flex w-[532px] pt-1 pl-[7px]">
        <button aria-label="Layer switches" className="flex w-9 justify-center text-[#2d8ceb]">
          <Svg w={24} h={22}>
            <path d="M1 1h12v12H1zM5 5h12v12H5z" fill="none" stroke="currentColor" strokeWidth="2" />
            <path d="M10 9h13v12H10z" fill="#262626" stroke="currentColor" strokeWidth="2" />
            <circle cx="16" cy="15" r="2.500" />
          </Svg>
        </button>
        <button aria-label="Transfer controls" className="flex w-9 justify-center">
          <Svg w={24} h={22}>
            <circle cx="9" cy="9" r="8" fill="none" stroke="currentColor" strokeWidth="2" />
            <path d="M10 9h12v12H10z" fill="#262626" stroke="currentColor" strokeWidth="2" />
          </Svg>
        </button>
        <button aria-label="In and out" className="flex w-9 justify-center">
          <Svg w={24} h={22}>
            <path d="M7 0h10v22H7z" fill="#777" />
            <path d="M5 0h3v7l-4 4 4 4v7H5v-6l-5-5 5-5zM19 0h-3v7l4 4-4 4v7h3v-6l5-5-5-5z" />
          </Svg>
        </button>
      </div>
      <button className="h-7 w-[266px] rounded-t-md border-2 border-b-0 border-[#323232] bg-[#1e1e1e] leading-6 whitespace-nowrap text-[#9c9c9c]">
        Toggle Switches / Modes
      </button>
      <div className="ml-[280px] flex items-center">
        <Svg w={20} h={10}><path d="M0 10l6-6 2 2 4-6 8 10z" /></Svg>
        <input
          type="range"
          aria-label="Timeline zoom"
          defaultValue="0"
          className="mx-5 h-1 w-24 appearance-none bg-[#444] [&::-webkit-slider-thumb]:size-5 [&::-webkit-slider-thumb]:appearance-none [&::-webkit-slider-thumb]:rounded-full [&::-webkit-slider-thumb]:border-[3px] [&::-webkit-slider-thumb]:border-[#9c9c9c] [&::-webkit-slider-thumb]:bg-[#262626]"
        />
        <Svg w={34} h={14}><path d="M0 14L11 2l3 3-7 9zM10 14L21 0l13 14z" /></Svg>
      </div>
    </div>
  </div>
);

const Timeline = () => (
  <section className="shrink-0 bg-[#282828]">
    <div className="flex h-[54px] text-[#9c9c9c]">
      <div className="ml-[22px] flex h-[52px] w-[200px] items-center border-b-4 border-[#b8b8b8] pt-2 text-[#c8c8c8]">
        <button aria-label="Close timeline" className="text-[#9c9c9c]"><CloseIcon /></button>
        <span className="ml-5 size-5 bg-[#a89572]" />
        <span className="ml-[22px]">Frame 02</span>
        <button aria-label="Timeline menu" className="ml-auto"><MenuIcon /></button>
      </div>
      <button className="ml-[72px] flex h-[52px] w-[254px] items-center gap-[22px] pt-1">
        <span className="size-5 bg-[#a89572]" />
        Animation
      </button>
      <button className="flex h-[52px] items-center gap-[22px] pt-1">
        <span className="size-5 bg-[#a89572]" />
        Render Screen
      </button>
    </div>
    <div className="flex">
      <div className="w-[1066px] shrink-0">
        <TimelineControls />
        <ColumnHeader />
        {rows.map((row, i) => (row.layer ? <LayerRow key={i} row={row} /> : <PropertyRow key={i} row={row} />))}
      </div>
      <TrackArea />
    </div>
    <TimelineFooter />
  </section>
);

const App = () => (
  <div className="flex min-h-screen flex-col bg-[#171717] font-['Open_Sans','Noto_Sans',sans-serif] text-[21px] leading-7">
    <TitleBar />
    <Toolbar />
    <main className="flex flex-1 flex-col gap-2 pt-1">
      <div className="flex flex-1 gap-2">
        <ProjectPanel />
        <CompositionPanel />
        <Sidebar />
      </div>
      <Timeline />
    </main>
  </div>
);

export default App;
